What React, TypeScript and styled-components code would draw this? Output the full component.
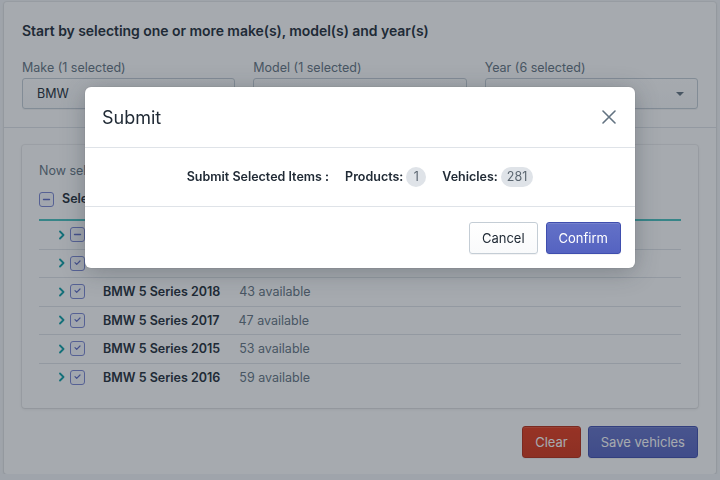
import styled, { createGlobalStyle } from 'styled-components';

const GlobalStyle = createGlobalStyle`
  body {
    margin: 0;
    background: #f4f6f8;
    font-family: Inter, "Liberation Sans", sans-serif;
    color: #212b36;
  }
  * { box-sizing: border-box; }
`;

const rows = [
  { name: 'BMW 5 Series 2019', count: 38, partial: true },
  { name: 'BMW 5 Series 2020', count: 41 },
  { name: 'BMW 5 Series 2018', count: 43 },
  { name: 'BMW 5 Series 2017', count: 47 },
  { name: 'BMW 5 Series 2015', count: 53 },
  { name: 'BMW 5 Series 2016', count: 59 },
];

const Chevron = () => (
  <svg width="6" height="10" viewBox="0 0 6 10">
    <path d="M1 1.5l3.5 3.5L1 8.5" fill="none" stroke="#0c9ea6" strokeWidth="1.8" strokeLinecap="round" strokeLinejoin="round" />
  </svg>
);

const Check = ({ partial }: { partial?: boolean }) => (
  <CheckBox>
    <svg width="9" height="9" viewBox="0 0 9 9">
      {partial ? (
        <path d="M1.5 4.5h6" stroke="#5c6ac4" strokeWidth="1.4" strokeLinecap="round" />
      ) : (
        <path d="M2 3.6l1.7 1.7L7 2" fill="none" stroke="#5c6ac4" strokeWidth="1.2" strokeLinecap="round" strokeLinejoin="round" />
      )}
    </svg>
  </CheckBox>
);

const App = () => {
  return (
    <>
      <GlobalStyle />
      <Page>
        <Card>
          <TopSection>
            <Heading>Start by selecting one or more make(s), model(s) and year(s)</Heading>
            <Fields>
              <Field>
                <Label>Make (1 selected)</Label>
                <Select>BMW</Select>
              </Field>
              <Field>
                <Label>Model (1 selected)</Label>
                <Select />
              </Field>
              <Field>
                <Label>Year (6 selected)</Label>
                <Select>
                  <Arrow width="8" height="4" viewBox="0 0 8 4">
                    <path d="M0 0h8L4 4z" fill="#637381" />
                  </Arrow>
                </Select>
              </Field>
            </Fields>
          </TopSection>
          <BottomSection>
            <InnerCard>
              <Hint>Now select vehicles</Hint>
              <HeaderRow>
                <Check partial />
                <HeaderText>Select all</HeaderText>
              </HeaderRow>
              {rows.map((r) => (
                <Row key={r.name}>
                  <Chevron />
                  <Check partial={r.partial} />
                  <RowName>{r.name}</RowName>
                  <RowCount>{r.count} available</RowCount>
                </Row>
              ))}
            </InnerCard>
            <Actions>
              <Button variant="destructive">Clear</Button>
              <Button variant="primary">Save vehicles</Button>
            </Actions>
          </BottomSection>
        </Card>
      </Page>

      <Backdrop>
        <Modal>
          <ModalHeader>
            <ModalTitle>Submit</ModalTitle>
            <CloseButton>
              <svg width="14" height="14" viewBox="0 0 14 14">
                <path d="M1 1l12 12M13 1L1 13" stroke="#637381" strokeWidth="1.6" strokeLinecap="round" />
              </svg>
            </CloseButton>
          </ModalHeader>
          <ModalBody>
            <Summary>Submit Selected Items :</Summary>
            <Summary>
              Products:<Badge>1</Badge>
            </Summary>
            <Summary>
              Vehicles:<Badge>281</Badge>
            </Summary>
          </ModalBody>
          <ModalFooter>
            <Button>Cancel</Button>
            <Button variant="primary">Confirm</Button>
          </ModalFooter>
        </Modal>
      </Backdrop>
    </>
  );
};

const Page = styled.div`
  padding: 2px 4px 0;
`;

const Card = styled.div`
  background: #fff;
  border-radius: 3px;
  box-shadow: 0 0 0 1px rgba(63, 63, 68, 0.05), 0 1px 3px 0 rgba(63, 63, 68, 0.15);
`;

const TopSection = styled.div`
  padding: 19px 18px 18px;
  border-bottom: 1px solid #dfe3e8;
`;

const Heading = styled.h2`
  margin: 0 0 17px;
  font-size: 14px;
  line-height: 20px;
  font-weight: 600;
  letter-spacing: -0.05px;
`;

const Fields = styled.div`
  display: grid;
  grid-template-columns: repeat(3, 1fr);
  gap: 18px;
`;

const Field = styled.div`
  display: flex;
  flex-direction: column;
`;

const Label = styled.label`
  font-size: 12.5px;
  line-height: 20px;
  color: #637381;
`;

const Select = styled.div`
  height: 31px;
  display: flex;
  align-items: center;
  padding: 0 14px;
  font-size: 12.5px;
  border: 1px solid #c4cdd5;
  border-radius: 3px;
  background: linear-gradient(180deg, #fff, #f9fafb);
  box-shadow: 0 1px 0 0 rgba(22, 29, 37, 0.05);
`;

const Arrow = styled.svg`
  margin-left: auto;
  margin-right: -1px;
`;

const BottomSection = styled.div`
  padding: 17px 18px 16px;
`;

const InnerCard = styled.div`
  padding: 16px 17px 17px;
  border-radius: 3px;
  background: #fff;
  box-shadow: 0 0 0 1px rgba(63, 63, 68, 0.07), 0 1px 3px 0 rgba(63, 63, 68, 0.15);
`;

const Hint = styled.p`
  margin: 0 0 6px;
  font-size: 12.5px;
  line-height: 20px;
  color: #637381;
`;

const HeaderRow = styled.div`
  display: flex;
  align-items: center;
  gap: 8px;
  padding: 2px 0 10px;
  border-bottom: 2px solid #47c1bf;
`;

const HeaderText = styled.span`
  font-size: 12.5px;
  line-height: 20px;
  font-weight: 600;
`;

const CheckBox = styled.span`
  width: 15px;
  height: 15px;
  display: inline-flex;
  align-items: center;
  justify-content: center;
  border: 1px solid #7a86d2;
  border-radius: 3px;
  background: #f7f8fd;
  flex: none;
`;

const Row = styled.div`
  display: flex;
  align-items: center;
  height: 28.5px;
  padding-left: 20px;
  border-bottom: 1px solid #dfe3e8;

  &:last-child {
    border-bottom: none;
    height: 27.5px;
  }

  & > svg {
    margin-right: 5px;
  }
`;

const RowName = styled.span`
  margin-left: 18px;
  font-size: 12.5px;
  font-weight: 600;
`;

const RowCount = styled.span`
  margin-left: 19px;
  font-size: 12.5px;
  color: #637381;
`;

const Actions = styled.div`
  display: flex;
  justify-content: flex-end;
  gap: 7px;
  margin-top: 18px;
`;

const Button = styled.button<{ variant?: 'primary' | 'destructive' }>`
  height: 32px;
  padding: 0 12px;
  font-family: inherit;
  font-size: 13px;
  border-radius: 3px;
  cursor: pointer;
  border: 1px solid
    ${({ variant }) => (variant === 'primary' ? '#3f4eae' : variant === 'destructive' ? '#b62b13' : '#c4cdd5')};
  background: ${({ variant }) =>
    variant === 'primary'
      ? 'linear-gradient(180deg, #6371c7, #5563c1)'
      : variant === 'destructive'
        ? 'linear-gradient(180deg, #e6391a, #d53417)'
        : 'linear-gradient(180deg, #fff, #f9fafb)'};
  color: ${({ variant }) => (variant ? '#fff' : '#212b36')};
  box-shadow: ${({ variant }) =>
    variant ? 'inset 0 1px 0 0 rgba(255,255,255,0.12), 0 1px 0 0 rgba(22,29,37,0.05)' : '0 1px 0 0 rgba(22,29,37,0.05)'};
`;

const Backdrop = styled.div`
  position: fixed;
  inset: 0;
  background: rgba(33, 43, 54, 0.4);
  display: flex;
  justify-content: center;
  align-items: flex-start;
  padding-top: 87px;
`;

const Modal = styled.div`
  width: 550px;
  background: #fff;
  border-radius: 6px;
  overflow: hidden;
  box-shadow: 0 0 0 1px rgba(63, 63, 68, 0.05), 0 4px 24px 0 rgba(33, 43, 54, 0.3);
`;

const ModalHeader = styled.div`
  height: 61px;
  display: flex;
  align-items: center;
  justify-content: space-between;
  padding: 0 17px;
  border-bottom: 1px solid #dfe3e8;
`;

const ModalTitle = styled.h2`
  margin: 0;
  font-size: 18px;
  font-weight: 400;
`;

const CloseButton = styled.button`
  border: none;
  background: none;
  padding: 0;
  width: 20px;
  height: 20px;
  display: flex;
  align-items: center;
  justify-content: center;
  margin-right: -1px;
  cursor: pointer;
`;

const ModalBody = styled.div`
  display: flex;
  justify-content: center;
  align-items: center;
  gap: 16px;
  padding: 19px 20px;
  border-bottom: 1px solid #dfe3e8;
`;

const Summary = styled.span`
  display: flex;
  align-items: center;
  gap: 3px;
  font-size: 12.5px;
  line-height: 20px;
  font-weight: 600;
`;

const Badge = styled.span`
  min-width: 20px;
  height: 20px;
  padding: 0 6px;
  display: inline-flex;
  align-items: center;
  justify-content: center;
  border-radius: 10px;
  background: #dfe3e8;
  color: #5b6670;
  font-weight: 400;
  font-size: 12.5px;
`;

const ModalFooter = styled.div`
  display: flex;
  justify-content: flex-end;
  gap: 8px;
  padding: 15px 14px 14px;
`;

export default App;
